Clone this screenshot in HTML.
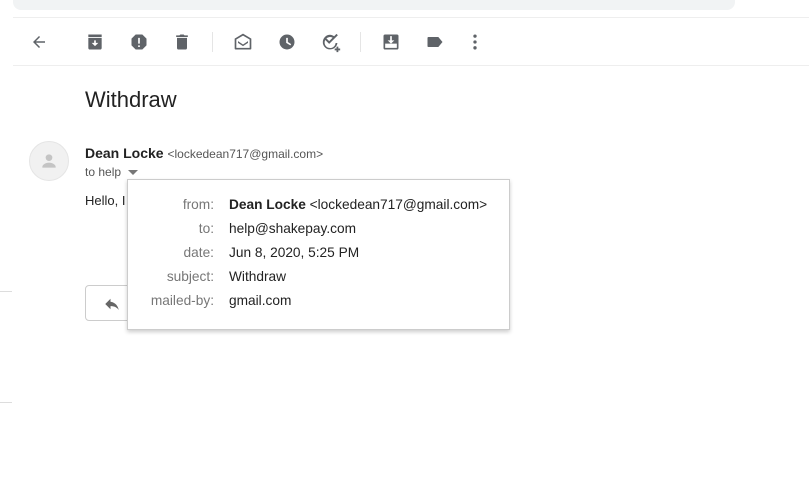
<!DOCTYPE html>
<html><head><style>
*{margin:0;padding:0;box-sizing:border-box}
body{width:809px;height:495px;background:#fff;font-family:"Liberation Sans",Arial,sans-serif;position:relative;overflow:hidden;color:#222}
.a{position:absolute}
svg{position:absolute;fill:#5f6368}
.pop td{font-size:13.7px;height:24px;color:#222;white-space:nowrap}
.pop td.l{color:#777;text-align:right;padding-right:15px;width:101px}
</style></head><body>
<div class="a" style="left:13px;top:-10px;width:722px;height:20px;background:#f1f3f4;border-radius:8px"></div>
<div class="a" style="left:13px;top:17px;width:796px;height:1px;background:#eee"></div>
<div class="a" style="left:13px;top:65px;width:796px;height:1px;background:#eee"></div>
<div class="a" style="left:212px;top:32px;width:1px;height:20px;background:#e5e5e5"></div>
<div class="a" style="left:360px;top:32px;width:1px;height:20px;background:#e5e5e5"></div>
<svg style="left:30px;top:33px" width="18" height="18" viewBox="0 0 24 24"><path d="M20 11H7.8l5.6-5.6L12 4l-8 8 8 8 1.4-1.4L7.8 13H20z"/></svg>
<svg style="left:85px;top:32px" width="20" height="20" viewBox="0 0 24 24"><path d="M4 3h16v3H4zM4 7h16v12a2 2 0 0 1-2 2H6a2 2 0 0 1-2-2zm8 10l4-4h-3V10h-2v3H8z"/></svg>
<svg style="left:129px;top:32px" width="20" height="20" viewBox="0 0 24 24"><path d="M8 3h8l5 5v8l-5 5H8l-5-5V8zM11 7v7h2V7zm0 9v2h2v-2z"/></svg>
<svg style="left:172px;top:32px" width="20" height="20" viewBox="0 0 24 24"><path d="M6 7h12v12a2 2 0 0 1-2 2H8a2 2 0 0 1-2-2zM5 4h4l1-1h4l1 1h4v2H5z"/></svg>
<svg style="left:233px;top:32px" width="20" height="20" viewBox="0 0 24 24"><path d="M12 2l10 6v12a1 1 0 0 1-1 1H3a1 1 0 0 1-1-1V8zm0 2.3L4 9v10h16V9zM6 11l6 4 6-4v2l-6 4-6-4z"/></svg>
<svg style="left:277px;top:32px" width="20" height="20" viewBox="0 0 24 24"><path d="M12 3a9 9 0 1 0 0 18 9 9 0 0 0 0-18zm-1 4h2v5l4 2.5-1 1.6-5-3z"/></svg>
<svg style="left:320px;top:32px" width="22" height="22" viewBox="0 0 24 24"><path d="M11 3a8 8 0 1 0 8 9h-2a6 6 0 1 1-2-5l1.4-1.4A8 8 0 0 0 11 3zm7-1l-8 8-3-3-1.5 1.5L10 13l9.5-9.5zM18 16h2v2h2v2h-2v2h-2v-2h-2v-2h2z"/></svg>
<svg style="left:381px;top:32px" width="20" height="20" viewBox="0 0 24 24"><path d="M5 3h14a2 2 0 0 1 2 2v14a2 2 0 0 1-2 2H5a2 2 0 0 1-2-2V5a2 2 0 0 1 2-2zm0 11v5h14v-5zm6-9v5H8l4 4 4-4h-3V5z"/></svg>
<svg style="left:425px;top:32px" width="20" height="20" viewBox="0 0 24 24"><path d="M4 6h12l5 6-5 6H4a1 1 0 0 1-1-1V7a1 1 0 0 1 1-1z"/></svg>
<svg style="left:465px;top:32px" width="20" height="20" viewBox="0 0 24 24"><circle cx="12" cy="5" r="2"/><circle cx="12" cy="12" r="2"/><circle cx="12" cy="19" r="2"/></svg>

<div class="a" style="left:85px;top:87px;font-size:22px;color:#222">Withdraw</div>
<div class="a" style="left:29px;top:141px;width:40px;height:40px;border-radius:50%;background:#f1f1f1;border:1px solid #e5e5e5"></div>
<svg style="left:39px;top:151px;fill:#c4c4c4" width="20" height="20" viewBox="0 0 24 24"><circle cx="12" cy="8" r="4"/><path d="M4 19c0-3 5-5 8-5s8 2 8 5v1H4z"/></svg>
<div class="a" style="left:85px;top:145px;font-size:14px"><b>Dean Locke</b> <span style="font-size:12px;color:#555">&lt;lockedean717@gmail.com&gt;</span></div>
<div class="a" style="left:85px;top:165px;font-size:12px;color:#555">to help</div>
<svg style="left:128px;top:170px;fill:#777" width="10" height="5" viewBox="0 0 10 5"><path d="M0 0h10L5 5z"/></svg>
<div class="a" style="left:85px;top:193px;font-size:13px">Hello, I</div>
<div class="a" style="left:85px;top:285px;width:100px;height:36px;border:1px solid #ccc;border-radius:4px"></div>
<svg style="left:103px;top:295px;fill:#666" width="18" height="18" viewBox="0 0 24 24"><path d="M10 9V5l-7 7 7 7v-4.1c5 0 8.5 1.6 11 5.1-1-5-4-10-11-11z"/></svg>
<div class="a" style="left:0;top:291px;width:12px;height:1px;background:#ddd"></div>
<div class="a" style="left:0;top:402px;width:12px;height:1px;background:#ddd"></div>

<div class="a pop" style="left:127px;top:179px;width:383px;height:151px;background:#fff;border:1px solid #ccc;box-shadow:0 2px 4px rgba(0,0,0,.2);padding:12px 0 0 0">
<table style="border-collapse:collapse">
<tr><td class="l">from:</td><td><b>Dean Locke</b> &lt;lockedean717@gmail.com&gt;</td></tr>
<tr><td class="l">to:</td><td>help@shakepay.com</td></tr>
<tr><td class="l">date:</td><td>Jun 8, 2020, 5:25 PM</td></tr>
<tr><td class="l">subject:</td><td>Withdraw</td></tr>
<tr><td class="l">mailed-by:</td><td>gmail.com</td></tr>
</table></div>
</body></html>
